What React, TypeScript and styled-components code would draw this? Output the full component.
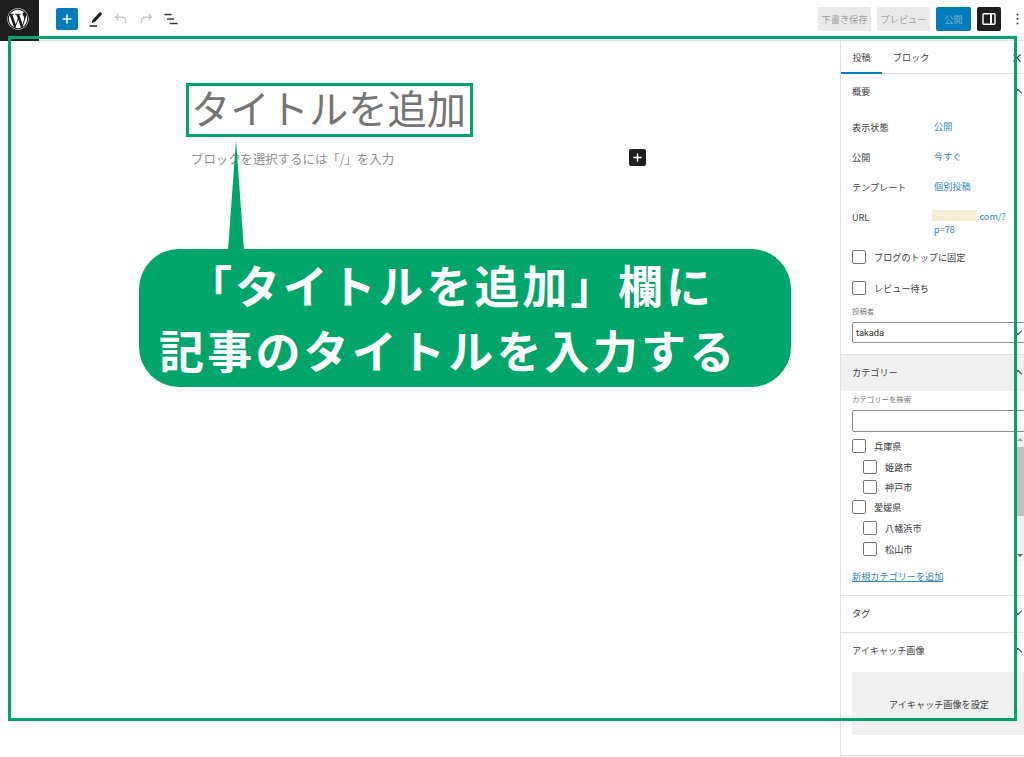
import React from "react";
import styled, { createGlobalStyle } from "styled-components";
import { FaWordpress } from "react-icons/fa";

const Global = createGlobalStyle`
  html, body { margin: 0; padding: 0; background: #fff; }
  body { font-family: "Noto Sans CJK JP", "Noto Sans", sans-serif; color: #3c3c3c; }
  #root { width: 1024px; height: 757px; overflow: hidden; }
  * { box-sizing: border-box; }
`;

const ANNOT = "#00a56a";

const Page = styled.div`
  position: relative;
  width: 1024px;
  height: 757px;
  overflow: hidden;
  display: flex;
  flex-direction: column;
`;

const TopBar = styled.header`
  height: 41px;
  flex: none;
  display: flex;
  align-items: flex-start;
  border-bottom: 1px solid #e0e0e0;
`;
const Logo = styled.div`
  width: 39px;
  height: 41px;
  background: #1e1e1e;
  color: #fff;
  display: flex;
  align-items: center;
  justify-content: center;
  padding: 0 3px 3px 0;
`;
const Tools = styled.div`
  margin-left: 17px;
  margin-top: 8px;
  display: flex;
  align-items: center;
  gap: 7px;
`;
const AddButton = styled.div`
  width: 22px;
  height: 22px;
  border-radius: 2px;
  background: #007cba;
  display: flex;
  align-items: center;
  justify-content: center;
`;
const ToolIcon = styled.div<{ $first?: boolean }>`
  width: 18px;
  height: 22px;
  margin-left: ${(p) => (p.$first ? "2px" : "0")};
  display: flex;
  align-items: center;
  justify-content: center;
`;
const Actions = styled.div`
  margin-left: auto;
  margin-top: 7px;
  display: flex;
  align-items: center;
  gap: 6px;
`;
const GreyButton = styled.div<{ $w: number }>`
  width: ${(p) => p.$w}px;
  height: 24px;
  background: #e9e9e9;
  border-radius: 2px;
  color: #a0a0a0;
  font-size: 9.2px;
  display: flex;
  align-items: center;
  justify-content: center;
`;
const PublishButton = styled(GreyButton)`
  background: #007cba;
  color: #7cb4d6;
`;
const PanelButton = styled.div`
  width: 24px;
  height: 24px;
  background: #1e1e1e;
  border-radius: 2px;
  display: flex;
  align-items: center;
  justify-content: center;
`;
const Dots = styled.div`
  width: 17px;
  height: 24px;
  display: flex;
  align-items: center;
  justify-content: flex-end;
  padding-right: 4px;
`;

const Body = styled.div`
  flex: 1;
  display: flex;
  min-height: 0;
`;
const Editor = styled.main`
  width: 840px;
  flex: none;
  padding: 43px 0 0 191px;
`;
const Title = styled.h1`
  margin: 0;
  font-size: 39.3px;
  line-height: 46px;
  font-weight: 400;
  color: #747474;
  white-space: nowrap;
`;
const Placeholder = styled.div`
  margin-top: 19px;
  width: 455px;
  height: 20px;
  display: flex;
  align-items: center;
  justify-content: space-between;
  font-size: 12.4px;
  color: #8d8d8d;
`;
const BlockPlus = styled.div`
  width: 17px;
  height: 17px;
  background: #1e1e1e;
  border-radius: 2px;
  display: flex;
  align-items: center;
  justify-content: center;
  margin-top: -4px;
`;

const Sidebar = styled.aside`
  width: 184px;
  flex: none;
  border-left: 1px solid #e0e0e0;
  font-size: 9.15px;
  line-height: 14px;
  overflow: hidden;
`;
const Tabs = styled.div`
  height: 33px;
  display: flex;
  align-items: stretch;
  border-bottom: 1px solid #e0e0e0;
`;
const Tab = styled.div<{ $active?: boolean; $w: number }>`
  width: ${(p) => p.$w}px;
  display: flex;
  align-items: center;
  justify-content: center;
  padding-bottom: 1px;
  height: 32px;
  ${(p) => (p.$active ? "box-shadow: inset 0 -2px 0 #007cba; margin-bottom: -1px; height: 33px;" : "")}
`;
const CloseMark = styled.div`
  margin-left: auto;
  margin-right: 3px;
  margin-top: 13px;
  height: 8px;
  display: flex;
`;
const SummaryHead = styled.div`
  height: 36px;
  padding: 0 3px 2px 11px;
  display: flex;
  align-items: center;
  justify-content: space-between;
`;
const Chevron = styled.span<{ $down?: boolean }>`
  width: 6px;
  height: 6px;
  flex: none;
  border-top: 1px solid #333;
  border-left: 1px solid #333;
  transform: translateY(${(p) => (p.$down ? "-2px" : "2px")}) rotate(${(p) => (p.$down ? "225deg" : "45deg")});
`;
const InfoGrid = styled.div`
  padding: 0 0 0 11px;
  display: grid;
  grid-template-columns: 82px 1fr;
`;
const InfoLabel = styled.div<{ $h: number }>`
  height: ${(p) => p.$h}px;
  padding-top: 10px;
`;
const InfoValue = styled.div<{ $h: number }>`
  height: ${(p) => p.$h}px;
  color: #2d86b8;
  padding-top: 10px;
  line-height: 13px;
  width: 76px;
  word-break: break-all;
`;
const Mask = styled.span`
  display: inline-block;
  width: 45px;
  height: 11px;
  margin-left: -2px;
  background: #f5ecd7;
  vertical-align: -1px;
`;
const Checks = styled.div`
  padding: 0 0 0 11px;
  display: flex;
  flex-direction: column;
`;
const CheckRow = styled.div<{ $indent?: boolean; $h: number }>`
  height: ${(p) => p.$h}px;
  display: flex;
  align-items: center;
  gap: 8px;
  margin-left: ${(p) => (p.$indent ? "11px" : "0")};
`;
const Box = styled.span`
  width: 14px;
  height: 14px;
  flex: none;
  border: 1px solid #757575;
  border-radius: 2px;
  background: #fff;
`;
const Small = styled.div`
  font-size: 7.4px;
  color: #757575;
  line-height: 10px;
`;
const AuthorBlock = styled.div`
  padding: 3px 0 0 11px;
  height: 51px;
`;
const Select = styled.div`
  margin-top: 6px;
  width: 180px;
  height: 21px;
  border: 1px solid #8c8c8c;
  border-radius: 2px;
  padding: 0 10px 0 3px;
  display: flex;
  align-items: center;
  justify-content: space-between;
  color: #2c2c2c;
  font-size: 9.3px;
  font-family: "Roboto", "Noto Sans", sans-serif;
`;
const Section = styled.section`
  border-top: 1px solid #e0e0e0;
`;
const CatHead = styled.div`
  height: 36px;
  background: #f0f0f0;
  padding: 0 3px 2px 11px;
  display: flex;
  align-items: center;
  justify-content: space-between;
`;
const CatBody = styled.div`
  padding: 3px 0 0 11px;
  height: 204px;
  position: relative;
`;
const SearchInput = styled.div`
  margin-top: 6px;
  width: 180px;
  height: 22px;
  border: 1px solid #8c8c8c;
  border-radius: 2px;
`;
const ScrollTrack = styled.div`
  position: absolute;
  right: 0;
  top: 44px;
  width: 8px;
  height: 126px;
  background: #f1f1f1;
  display: flex;
  flex-direction: column;
  align-items: center;
`;
const ScrollArrow = styled.span<{ $down?: boolean }>`
  width: 0;
  height: 0;
  margin-top: ${(p) => (p.$down ? "38px" : "3px")};
  border-left: 3px solid transparent;
  border-right: 3px solid transparent;
  ${(p) => (p.$down ? "border-top: 3px solid #666;" : "border-bottom: 3px solid #a0a0a0;")}
`;
const ScrollThumb = styled.div`
  margin-top: 6px;
  width: 8px;
  height: 69px;
  background: #c1c1c1;
`;
const CatList = styled.div`
  display: flex;
  flex-direction: column;
  margin-top: 3px;
`;
const AddLink = styled.div`
  margin-top: 10px;
  color: #2d86b8;
  text-decoration: underline;
`;
const PanelRow = styled.div`
  height: 36px;
  padding: 0 3px 2px 11px;
  display: flex;
  align-items: center;
  justify-content: space-between;
`;
const ThumbBox = styled.div`
  margin: 3px 0 0 11px;
  width: 180px;
  height: 63px;
  background: #f0f0f0;
  padding: 25px 0 0 37px;
`;
const LastLine = styled.div`
  margin-top: 20px;
  border-top: 1px solid #e0e0e0;
`;

const Frame = styled.div`
  position: absolute;
  left: 8px;
  top: 36px;
  width: 1009px;
  height: 685px;
  border: 3px solid ${ANNOT};
  pointer-events: none;
`;
const TitleFrame = styled.div`
  position: absolute;
  left: 186px;
  top: 83px;
  width: 287px;
  height: 54px;
  border: 3px solid ${ANNOT};
`;
const Tail = styled.div`
  position: absolute;
  left: 228px;
  top: 140px;
  width: 16px;
  height: 110px;
  background: ${ANNOT};
  clip-path: polygon(50% 0, 100% 100%, 0 100%);
`;
const Callout = styled.div`
  position: absolute;
  left: 139px;
  top: 249px;
  width: 652px;
  height: 138px;
  background: ${ANNOT};
  border-radius: 40px;
  color: #fff;
  font-weight: 700;
  font-size: 45px;
  line-height: 65px;
  letter-spacing: 3.2px;
  white-space: nowrap;
  padding: 3px 0 0 20px;
`;
const CalloutLine = styled.div<{ $first?: boolean }>`
  margin-left: ${(p) => (p.$first ? "28px" : "0")};
  letter-spacing: ${(p) => (p.$first ? "2.9px" : "3.2px")};
`;

const Plus = ({ s = 12 }: { s?: number }) => (
  <svg width={s} height={s} viewBox="0 0 12 12">
    <path d="M6 1.5v9M1.5 6h9" stroke="#fff" strokeWidth="1.5" />
  </svg>
);

const Cat = ({ name, indent, h }: { name: string; indent?: boolean; h: number }) => (
  <CheckRow $indent={indent} $h={h}>
    <Box />
    <span>{name}</span>
  </CheckRow>
);

export default function App() {
  return (
    <Page>
      <Global />
      <TopBar>
        <Logo>
          <FaWordpress size={22} />
        </Logo>
        <Tools>
          <AddButton><Plus /></AddButton>
          <ToolIcon $first>
            <svg width="16" height="18" viewBox="0 0 16 18">
              <path d="M4.5 10 11.2 2.8c.7-.7 1.7-.6 2.2 0s.6 1.5 0 2.1L6.8 12l-3.2 1z" fill="#1e1e1e" />
              <path d="M1.5 16h7.5" stroke="#1e1e1e" strokeWidth="1.5" />
            </svg>
          </ToolIcon>
          <ToolIcon>
            <svg width="16" height="16" viewBox="0 0 16 16" fill="none" stroke="#c8c8c8" strokeWidth="1.4">
              <path d="M5.5 3 2.5 6.2l3 3M2.8 6.2h6.4c2 0 3.3 1.3 3.3 3.2v3" />
            </svg>
          </ToolIcon>
          <ToolIcon>
            <svg width="16" height="16" viewBox="0 0 16 16" fill="none" stroke="#c8c8c8" strokeWidth="1.4">
              <path d="M10.5 3l3 3.2-3 3M13.2 6.2H6.8c-2 0-3.3 1.3-3.3 3.2v3" />
            </svg>
          </ToolIcon>
          <ToolIcon>
            <svg width="16" height="16" viewBox="0 0 16 16" stroke="#3a3a3a" strokeWidth="1.5">
              <path d="M1.5 3.5h7M4 8h7M6.5 12.5h8" />
            </svg>
          </ToolIcon>
        </Tools>
        <Actions>
          <GreyButton $w={53}>下書き保存</GreyButton>
          <GreyButton $w={53}>プレビュー</GreyButton>
          <PublishButton $w={35}>公開</PublishButton>
          <PanelButton>
            <svg width="16" height="16" viewBox="0 0 16 16" fill="none" stroke="#fff" strokeWidth="1.4">
              <rect x="2" y="2.7" width="12" height="10.6" rx="1" />
              <path d="M10 2.7v10.6" strokeWidth="2" />
            </svg>
          </PanelButton>
          <Dots>
            <svg width="5" height="14" viewBox="0 0 5 14" fill="#333">
              <circle cx="2.5" cy="2.5" r="1" />
              <circle cx="2.5" cy="7" r="1" />
              <circle cx="2.5" cy="11.5" r="1" />
            </svg>
          </Dots>
        </Actions>
      </TopBar>
      <Body>
        <Editor>
          <Title>タイトルを追加</Title>
          <Placeholder>
            <span>ブロックを選択するには「/」を入力</span>
            <BlockPlus><Plus s={11} /></BlockPlus>
          </Placeholder>
        </Editor>
        <Sidebar>
          <Tabs>
            <Tab $active $w={41}>投稿</Tab>
            <Tab $w={58}>ブロック</Tab>
            <CloseMark>
              <svg width="8" height="8" viewBox="0 0 8 8" fill="none" stroke="#333" strokeWidth="1.1">
                <path d="M.5.5l7 7M7.5.5l-7 7" />
              </svg>
            </CloseMark>
          </Tabs>
          <SummaryHead>概要<Chevron /></SummaryHead>
          <InfoGrid>
            <InfoLabel $h={30}>表示状態</InfoLabel>
            <InfoValue $h={30}>公開</InfoValue>
            <InfoLabel $h={30}>公開</InfoLabel>
            <InfoValue $h={30}>今すぐ</InfoValue>
            <InfoLabel $h={30}>テンプレート</InfoLabel>
            <InfoValue $h={30}>個別投稿</InfoValue>
            <InfoLabel $h={41}>URL</InfoLabel>
            <InfoValue $h={41}><Mask />.com/?p=78</InfoValue>
          </InfoGrid>
          <Checks>
            <CheckRow $h={31}><Box /><span>ブログのトップに固定</span></CheckRow>
            <CheckRow $h={31}><Box /><span>レビュー待ち</span></CheckRow>
          </Checks>
          <AuthorBlock>
            <Small>投稿者</Small>
            <Select>takada<Chevron $down /></Select>
          </AuthorBlock>
          <Section>
            <CatHead>カテゴリー<Chevron /></CatHead>
            <CatBody>
              <Small>カテゴリーを検索</Small>
              <SearchInput />
              <CatList>
                <Cat name="兵庫県" h={21} />
                <Cat name="姫路市" indent h={21} />
                <Cat name="神戸市" indent h={20} />
                <Cat name="愛媛県" h={20} />
                <Cat name="八幡浜市" indent h={21} />
                <Cat name="松山市" indent h={21} />
              </CatList>
              <AddLink>新規カテゴリーを追加</AddLink>
              <ScrollTrack>
                <ScrollArrow />
                <ScrollThumb />
                <ScrollArrow $down />
              </ScrollTrack>
            </CatBody>
          </Section>
          <Section>
            <PanelRow>タグ<Chevron $down /></PanelRow>
          </Section>
          <Section>
            <PanelRow>アイキャッチ画像<Chevron /></PanelRow>
            <ThumbBox>アイキャッチ画像を設定</ThumbBox>
            <LastLine />
          </Section>
        </Sidebar>
      </Body>
      <Frame />
      <TitleFrame />
      <Tail />
      <Callout>
        <CalloutLine $first>「タイトルを追加」欄に</CalloutLine>
        <CalloutLine>記事のタイトルを入力する</CalloutLine>
      </Callout>
    </Page>
  );
}
